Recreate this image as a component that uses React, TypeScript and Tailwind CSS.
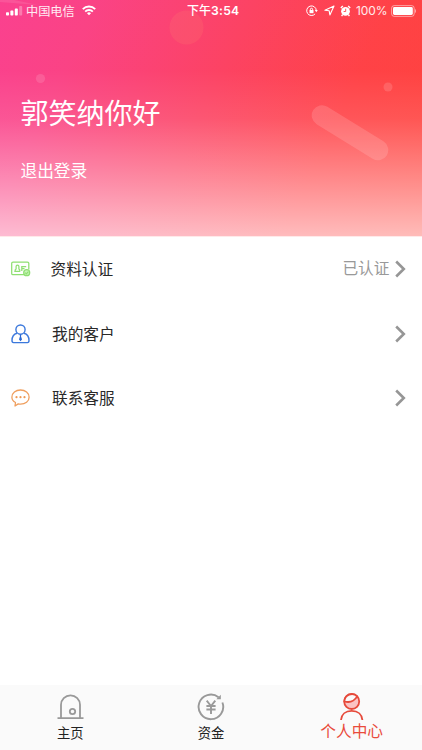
import React from "react";

function StatusBar() {
  return (
    <div className="relative flex h-[21px] items-center justify-between pl-[6px] pr-[5px] text-[12px] leading-[21px] text-white/90">
      <div className="flex items-center">
        <svg width="17" height="10" viewBox="0 0 17 10" fill="white">
          <rect x="0" y="6.2" width="3" height="3.3" rx=".8" />
          <rect x="4.4" y="4.6" width="3" height="4.9" rx=".8" />
          <rect x="8.8" y="2.6" width="3" height="6.9" rx=".8" />
          <rect x="13.2" y="0" width="3" height="9.5" rx=".8" opacity=".3" />
        </svg>
        <span className="ml-[3px] mt-px text-[12.2px]">中国电信</span>
        <svg className="ml-[7px]" width="14" height="11" viewBox="0 0 14 11" fill="none" stroke="white" strokeWidth="1.9">
          <path d="M.8 4.1a8.8 8.8 0 0 1 12.4 0" />
          <path d="M3.2 6.6a5.4 5.4 0 0 1 7.6 0" />
          <path d="M7 10.2 5 8.2a2.8 2.8 0 0 1 4 0z" fill="white" stroke="none" />
        </svg>
      </div>
      <div className="flex items-center">
        <svg width="12" height="12" viewBox="0 0 12 12" fill="none" stroke="white" strokeWidth="1">
          <path d="M9.1 8.9A4.8 4.8 0 1 1 10.3 5.5" />
          <path d="M8.8 5h3L10.3 7.2z" fill="white" stroke="none" />
          <rect x="3.5" y="5" width="4" height="3.2" fill="white" stroke="none" />
          <path d="M4.4 5.2V4.3a1.1 1.1 0 0 1 2.2 0v.9" />
        </svg>
        <svg className="ml-[6px]" width="11" height="11" viewBox="0 0 11 11" fill="none" stroke="white" strokeWidth="1.1" strokeLinejoin="round">
          <path d="M.9 5.3 10 1 5.9 10 5.2 5.8z" />
        </svg>
        <svg className="ml-[5px]" width="11" height="12" viewBox="0 0 11 12">
          <circle cx="5.5" cy="6.3" r="4.4" fill="white" />
          <path d="m.8 3 2-2M10.2 3l-2-2M2.6 9.7l-1 1.4M8.4 9.7l1 1.4" stroke="white" strokeWidth="1.4" />
          <path d="M5.7 3.7v2.8H3.6" fill="none" stroke="#ff424c" strokeWidth=".9" />
        </svg>
        <span className="ml-[5px] w-[32px] whitespace-nowrap font-[Inter,sans-serif] text-[12px] tracking-[-0.1px]">100%</span>
        <svg className="ml-[3px] mr-px" width="25" height="12" viewBox="0 0 25 12">
          <rect x=".6" y=".6" width="22.6" height="10.8" rx="2.6" fill="none" stroke="white" opacity=".5" />
          <rect x="2" y="2" width="19.8" height="8" rx="1.4" fill="white" />
          <path d="M24 4v4a2.3 2.3 0 0 0 0-4" fill="white" opacity=".5" />
        </svg>
      </div>
      <span className="absolute left-[187px] top-0 whitespace-nowrap font-[Inter,'Noto_Sans_CJK_SC',sans-serif] text-[12px] font-medium text-white">下午<span className="text-[12.2px] font-semibold tracking-[0.25px]">3:54</span></span>
    </div>
  );
}

function Header() {
  return (
    <header className="relative h-[236px] overflow-hidden bg-[linear-gradient(115deg,#fa3d8d_0%,#fa3f83_18%,#fc3f60_48%,#ff3e43_74%,#ff3f37_100%)]">
      <svg className="absolute inset-0" width="422" height="236" viewBox="0 0 422 236">
        <defs>
          <linearGradient id="fade" x1="0" y1="0" x2="0" y2="1">
            <stop offset="0" stopColor="white" stopOpacity=".02" />
            <stop offset=".3" stopColor="white" stopOpacity=".02" />
            <stop offset=".5" stopColor="white" stopOpacity=".12" />
            <stop offset=".75" stopColor="white" stopOpacity=".38" />
            <stop offset="1" stopColor="white" stopOpacity=".65" />
          </linearGradient>
        </defs>
        <rect width="422" height="236" fill="url(#fade)" />
        <path d="M0 0H14L38 5L0 2Z" fill="white" opacity=".1" />
        <circle cx="186.500" cy="27.500" r="17" fill="#ff806f" opacity=".2" />
        <circle cx="40.500" cy="78.500" r="4.600" fill="white" opacity=".13" />
        <circle cx="388" cy="87" r="4.500" fill="white" opacity=".14" />
        <path d="M322 115.500 378 150" stroke="white" strokeWidth="20.500" strokeLinecap="round" opacity=".14" />
      </svg>
      <StatusBar />
      <div className="relative pl-[20.5px] text-white">
        <h1 className="mt-[71px] text-[28px] font-normal leading-[40px]">郭笑纳你好</h1>
        <button className="mt-[26px] block text-[16.7px] leading-[24px]">退出登录</button>
      </div>
    </header>
  );
}

function CertificateIcon() {
  return (
    <svg width="20" height="16" viewBox="0 0 20 16" fill="none" stroke="#8fdf72" strokeWidth="1.250">
      <path d="M13.500 13.700H2A1.300 1.300 0 0 1 .7 12.400V2.300A1.300 1.300 0 0 1 2 1H16.500A1.300 1.300 0 0 1 17.800 2.300V8.500" />
      <path d="M3.300 10.300h6M4.200 10V8.900l.9-.9V5.600a1.400 1.400 0 0 1 2.800 0V8l.9.900V10M10.800 10V5.500h4.400M10.700 7.700h2.800" />
      <circle cx="15.700" cy="11.700" r="3" fill="#c9f4b9" />
      <path d="m14.200 11.600 1.200 1.200 2-2.200" />
    </svg>
  );
}

function CustomerIcon() {
  return (
    <svg width="20" height="20" viewBox="0 0 20 20" fill="none" stroke="#3b78dc" strokeWidth="1.400">
      <circle cx="9.500" cy="5.600" r="4.600" />
      <path d="M6 9.200C3 10 1 12.500 1 16.500Q1 18.600 2.500 18.600H16.500Q18 18.600 18 16.500C18 12.500 16 10 13 9.200" />
      <path d="m8.600 10.500h1.800l-.4 1.700 1 3.300-1.500 1.700L8 15.500l1-3.300z" fill="#2867d4" stroke="none" />
    </svg>
  );
}

function ChatIcon() {
  return (
    <svg width="20" height="18" viewBox="0 0 20 18" fill="none" stroke="#ef9f5f" strokeWidth="1.300">
      <path d="M4.500 13.500C2.300 12.300.9 10.400.9 8.200.9 4.100 4.700 1 9.500 1S18.100 4.100 18.100 8.200 14.300 15.200 9.500 15.200q-1.200 0-2.300-.3L4 17z" strokeLinejoin="round" />
      <g fill="#ef9953" stroke="none"><circle cx="5.500" cy="8.200" r="1.100" /><circle cx="9.500" cy="8.200" r="1.100" /><circle cx="13.500" cy="8.200" r="1.100" /></g>
    </svg>
  );
}

function MenuRow({ icon, label, status }: { icon: React.ReactNode; label: string; status?: string }) {
  return (
    <div className="flex h-[64.5px] items-center pl-[11px] pr-[16px]">
      <span className="flex w-5 shrink-0">{icon}</span>
      <span className={`${status ? "ml-[19.5px]" : "ml-[21px]"} text-[15.700px] leading-6 text-[#292929]`}>{label}</span>
      <span className="ml-auto mr-[5.5px] -mt-[2px] text-[15.700px] leading-6 text-[#999]">{status}</span>
      <svg width="11" height="18" viewBox="0 0 11 18" fill="none" stroke="#969696" strokeWidth="2.600">
        <path d="m1.200 1.500 7.600 7.500-7.600 7.500" />
      </svg>
    </div>
  );
}

function TabBar() {
  return (
    <nav className="grid h-[65px] grid-cols-3 bg-[#fafafa] text-[13.300px] leading-[20px] text-[#222]">
      <div className="flex flex-col items-center pt-[9px]">
        <svg width="27" height="26" viewBox="0 0 27 26" fill="none" stroke="#999" strokeWidth="1.800">
          <path d="M.5 24.200h26M4 24V10.800a9.500 9.500 0 0 1 19 0V24" />
          <circle cx="15.500" cy="17.500" r="2.700" />
        </svg>
        <span className="mt-[3px]">主页</span>
      </div>
      <div className="flex flex-col items-center pt-[8px]">
        <svg width="28" height="28" viewBox="0 0 28 28" fill="none" stroke="#999" strokeWidth="1.900">
          <path d="M25.400 9.500A12.300 12.300 0 1 1 21.500 4.200" />
          <path d="M23.800 1.700v4.500h-4.500" fill="#999" stroke="none" />
          <path d="m9.700 7.700 4.300 5.300 4.300-5.300M9.400 13h9.200M9.400 16.500h9.200M14 13v8" />
        </svg>
        <span className="mt-[2px]">资金</span>
      </div>
      <div className="flex flex-col items-center pt-[8px] text-[#e94b3c]">
        <svg width="26" height="28" viewBox="0 0 26 28" fill="none" stroke="#e64a3b" strokeWidth="1.800">
          <circle cx="12.700" cy="8.500" r="7.500" fill="#fbc3c3" />
          <path d="M5.400 8.500C10.200 9.800 15.200 8.300 18.200 3.400A7.500 7.500 0 0 0 5.400 8.500Z" fill="#fafafa" />
          <path d="M2 27C2.400 21.500 6.500 17.900 12.700 17.900S23 21.500 23.400 27" />
        </svg>
        <span className="text-[15.700px] leading-[20px]">个人中心</span>
      </div>
    </nav>
  );
}

export default function App() {
  return (
    <div className="flex h-[750px] w-[422px] flex-col overflow-hidden bg-white font-['Noto_Sans_CJK_SC',sans-serif]">
      <Header />
      <main className="flex-1 border-t border-[#ffe9e9]">
        <MenuRow icon={<CertificateIcon />} label="资料认证" status="已认证" />
        <MenuRow icon={<CustomerIcon />} label="我的客户" />
        <MenuRow icon={<ChatIcon />} label="联系客服" />
      </main>
      <TabBar />
    </div>
  );
}
